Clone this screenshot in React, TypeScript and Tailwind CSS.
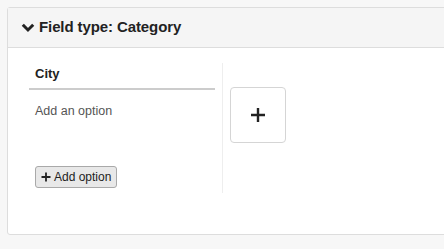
import React from "react";

export default function App() {
  return (
    <div
      className="w-[444px] h-[249px] overflow-hidden bg-[#f7f7f7] pt-[7px] pl-[7px]"
      style={{ fontFamily: '"Liberation Sans", Arial, sans-serif' }}
    >
      <div className="w-[460px] h-[228px] border border-[#dddddd] rounded-[3px] bg-white">
        <div className="h-[40px] bg-[#f5f5f5] border-b border-[#dddddd] flex items-center pl-[13px]">
          <svg width="14" height="10" viewBox="0 0 14 10" className="mr-[4px] mt-[1px]">
            <path d="M1.8 1.8 L7 7 L12.2 1.8" stroke="#222" strokeWidth="3" fill="none" />
          </svg>
          <span className="text-[15px] font-bold text-[#222] tracking-[-0.1px]">Field type: Category</span>
        </div>
        <div className="flex pl-[21px] pt-[15px]">
          <div className="w-[194px] h-[130px] border-r border-[#eeeeee] pr-[7px]">
            <div className="border-b-2 border-[#cccccc] px-[6px] pt-[3px] pb-[6px] text-[13px] font-bold text-[#222] leading-[16px]">
              City
            </div>
            <div className="px-[6px] pt-[14px] text-[12.5px] text-[#555] leading-[14px]">Add an option</div>
            <div className="px-[6px] pt-[48px]">
              <button className="h-[22px] px-[5px] flex items-center gap-[3px] bg-[#e8e8e8] border border-[#a9a9a9] rounded-[3px] text-[12px] text-[#222] leading-none">
                <svg width="10" height="10" viewBox="0 0 10 10">
                  <path d="M5 0.5 V9.5 M0.5 5 H9.5" stroke="#222" strokeWidth="1.8" />
                </svg>
                Add option
              </button>
            </div>
          </div>
          <div className="pl-[7px] pt-[24px]">
            <div className="w-[56px] h-[56px] border border-[#d5d5d5] rounded-[4px] flex items-center justify-center bg-white">
              <svg width="16" height="16" viewBox="0 0 16 16">
                <path d="M8 1 V15 M1 8 H15" stroke="#222" strokeWidth="2.4" />
              </svg>
            </div>
          </div>
        </div>
      </div>
    </div>
  );
}
